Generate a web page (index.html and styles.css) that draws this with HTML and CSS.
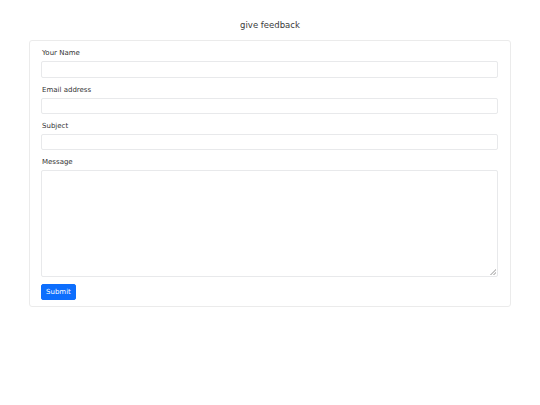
FILE: index.html
```html
<!DOCTYPE html>
<html>
<head>
<meta charset="utf-8">
<title>give feedback</title>
<link rel="stylesheet" href="styles.css">
</head>
<body>
<h1 class="title">give feedback</h1>
<form class="card">
  <label class="label" for="name">Your Name</label>
  <input class="field" id="name" type="text">
  <label class="label" for="email">Email address</label>
  <input class="field" id="email" type="email">
  <label class="label" for="subject">Subject</label>
  <input class="field" id="subject" type="text">
  <label class="label" for="message">Message</label>
  <textarea class="field area" id="message"></textarea>
  <div class="actions"><button class="btn" type="button">Submit</button></div>
</form>
</body>
</html>
```
FILE: styles.css
```css
html, body {
  margin: 0;
  padding: 0;
  background: #fff;
  font-family: "DejaVu Sans", sans-serif;
  color: #212529;
}
.title {
  margin: 19px 0 9px;
  font-size: 8.5px;
  line-height: 12px;
  font-weight: normal;
  text-align: center;
  color: #3a3a3a;
}
.card {
  display: flex;
  flex-direction: column;
  margin: 0 29px;
  padding: 6.3px 12px 5.5px 11px;
  border: 1px solid #ebebeb;
  border-radius: 3px;
}
.label {
  display: block;
  font-size: 7px;
  line-height: 10px;
  padding-top: 1px;
  margin: 0 0 3px 1px;
  color: #333;
}
.field {
  display: block;
  box-sizing: border-box;
  width: 100%;
  height: 16.4px;
  margin: 0 0 6px;
  padding: 0 4px;
  border: 1px solid #e8e9eb;
  border-radius: 2px;
  background: #fff;
  font-family: "DejaVu Sans", sans-serif;
  font-size: 7px;
}
.area {
  height: 107px;
  margin-bottom: 6.3px;
  resize: vertical;
}
.area::-webkit-resizer {
  background-image: linear-gradient(135deg, transparent 48%, #c8c8c8 48%, #c8c8c8 60%, transparent 60%, transparent 74%, #c8c8c8 74%, #c8c8c8 86%, transparent 86%);
  background-size: 6px 6px;
  background-position: right 1px bottom 1px;
  background-repeat: no-repeat;
}
.actions {
  display: flex;
}
.btn {
  height: 16.5px;
  padding: 0 4px;
  border: 1px solid #0d6efd;
  border-radius: 2px;
  background: #0d6efd;
  color: #fff;
  font-family: "DejaVu Sans", sans-serif;
  font-size: 7px;
  line-height: 14px;
}
```
